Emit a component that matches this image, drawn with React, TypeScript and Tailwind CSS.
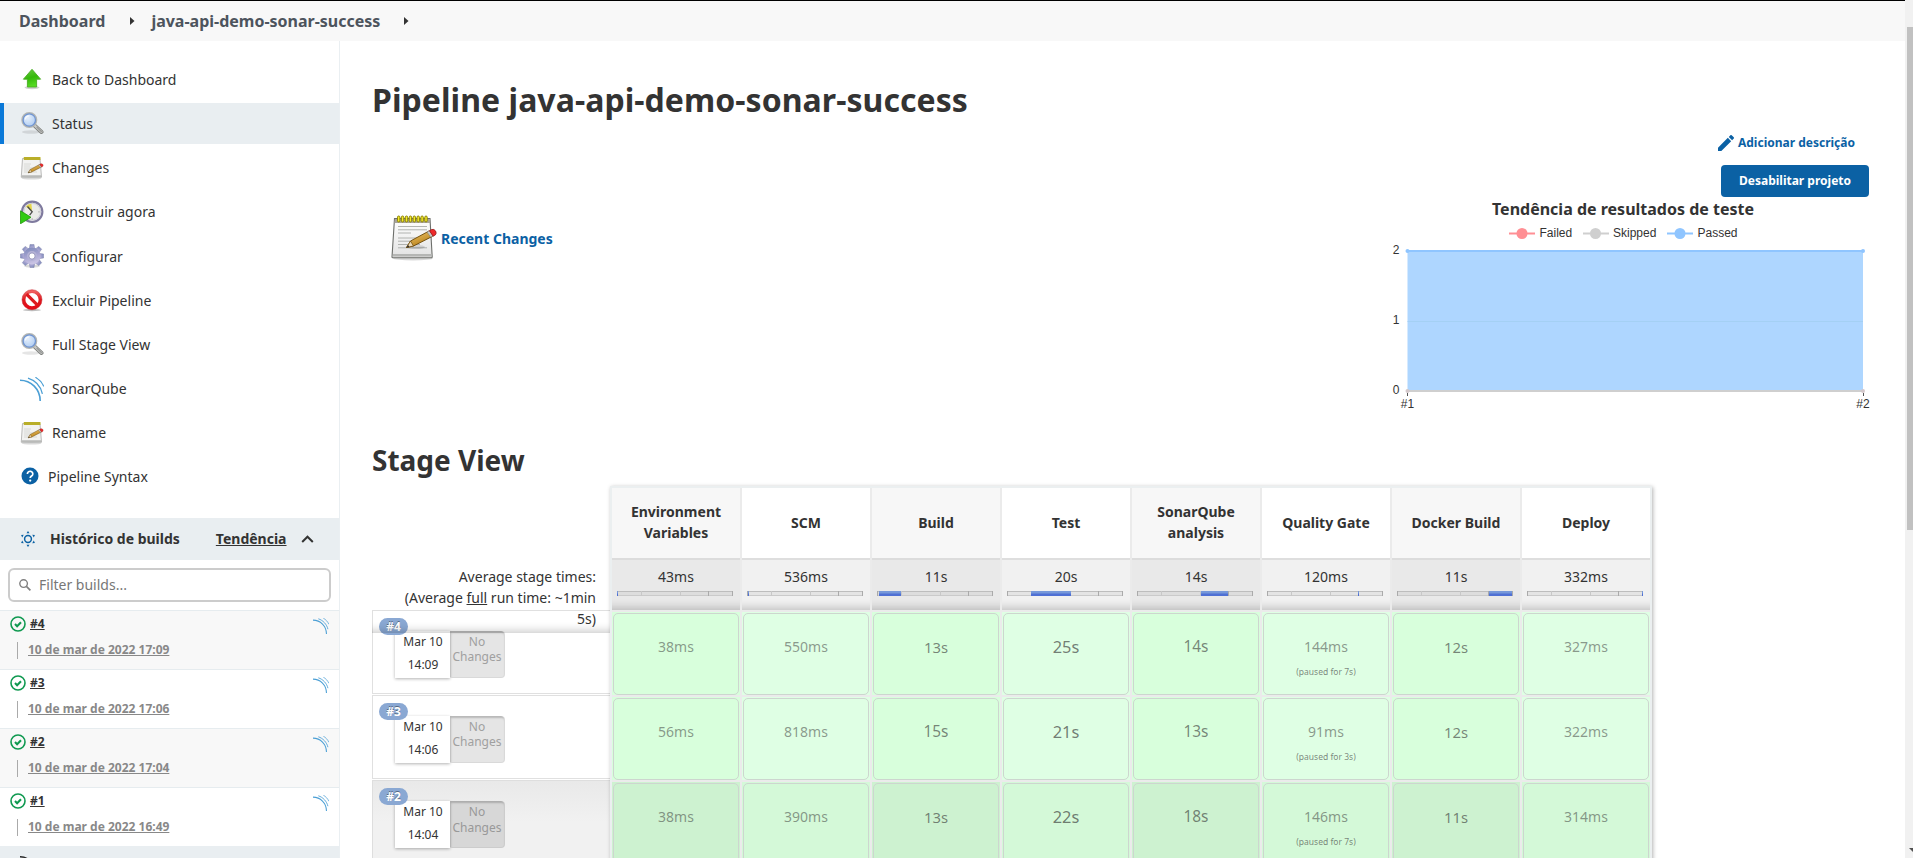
import React from "react";

const Magnifier = () => (
  <svg width="24" height="24" viewBox="0 0 24 24">
    <defs>
      <radialGradient id="lens" cx="0.4" cy="0.35" r="0.7">
        <stop offset="0" stopColor="#e6f0fc" />
        <stop offset="1" stopColor="#a9c8f0" />
      </radialGradient>
    </defs>
    <ellipse cx="11" cy="21" rx="9" ry="1.8" fill="#000" opacity="0.1" />
    <path d="M14.5 14.5l7 6.5" stroke="#7d7f7c" strokeWidth="4" strokeLinecap="round" />
    <path d="M15 14.8l6.5 6" stroke="#c9cac8" strokeWidth="2.4" strokeLinecap="round" />
    <path d="M17 16.2l4.4 4.2" stroke="#9a9b99" strokeWidth="1.4" strokeLinecap="round" />
    <circle cx="9.3" cy="9" r="7.1" fill="url(#lens)" stroke="#b4b6b3" strokeWidth="1.8" />
    <circle cx="9.3" cy="9" r="6.2" fill="none" stroke="#6f94d2" strokeWidth="1.3" />
    <path d="M5.4 8.5a4 4 0 014-3.6" stroke="#fff" strokeWidth="1.3" fill="none" opacity="0.8" />
  </svg>
);

const Pencil = () => (
  <g>
    <path d="M16.5 33.5l4-6.5L39 17l3.8 5.2L23.5 32z" fill="url(#pen)" stroke="#6a4606" strokeWidth="0.9" strokeLinejoin="round" />
    <path d="M16.5 33.5l4-6.5 3 5z" fill="#ecd9b4" stroke="#6a4606" strokeWidth="0.7" />
    <path d="M16.5 33.5l1.6-2.6 1.3 2z" fill="#2a2a2a" />
    <path d="M37 18l2.6-1.4 3.6 5.2-2.5 1.4z" fill="#c8cac7" stroke="#70726f" strokeWidth="0.5" />
    <path d="M39.4 16.7l2.2-1.2q2.6-.8 4 1.5t-.3 4l-2.2 1.2z" fill="#ee2a2a" stroke="#8e1010" strokeWidth="0.7" />
  </g>
);

const PadDefs = () => (
  <defs>
    <linearGradient id="paper" x1="0" y1="0" x2="0" y2="1">
      <stop offset="0" stopColor="#ffffff" />
      <stop offset="1" stopColor="#e2e2e2" />
    </linearGradient>
    <linearGradient id="pen" x1="0" y1="0" x2="0.6" y2="1">
      <stop offset="0" stopColor="#f4cf7a" />
      <stop offset="1" stopColor="#b47a0e" />
    </linearGradient>
  </defs>
);

const Notepad = () => (
  <svg width="48" height="48" viewBox="0 0 48 48">
    <PadDefs />
    <ellipse cx="23" cy="44.6" rx="20" ry="1.8" fill="#000" opacity="0.15" />
    <path d="M4.5 4.5h35.5l2.2 38.5q0 .8-.8.8H2.8q-.8 0-.8-.8z" fill="url(#paper)" stroke="#6d6f6b" strokeWidth="1.1" />
    <path d="M3 40h38.6v2.6H2.7z" fill="#b5b6b4" />
    <path d="M4.8 5h35l.3 4H4.5z" fill="#a9a49a" />
    <path d="M8 12.5h29M8 15.8h29M8 19h13M8 24h29M8 27.2h25M8 30.5h22M8 33.8h29" stroke="#a9aba8" strokeWidth="0.9" />
    <g fill="#f3ea27" stroke="#8e8408" strokeWidth="1">
      {[7.5, 11.4, 15.3, 19.2, 23.1, 27, 30.9, 34.8].map((x) => (
        <rect key={x} x={x} y="2" width="2.4" height="6" rx="1.2" />
      ))}
    </g>
    <ellipse cx="26" cy="33" rx="9" ry="2" fill="#000" opacity="0.12" />
    <Pencil />
  </svg>
);

const SmallNotepad = () => (
  <svg width="24" height="24" viewBox="0 0 48 48">
    <PadDefs />
    <ellipse cx="23" cy="44.6" rx="20" ry="2.4" fill="#000" opacity="0.15" />
    <path d="M5 5h35l3 37.5H2.5z" fill="#f2f2f1" stroke="#a9aaa8" strokeWidth="1.6" />
    <path d="M3.500 38.500h38.600l.4 4H3z" fill="#b9bab8" />
    <path d="M8 16h14M8 20h12M8 24h29M8 28h22M8 32h26" stroke="#d2d3d1" strokeWidth="1.6" />
    <path d="M7.500 2h33.500v6H7.500z" fill="#c3b92f" />
    <path d="M10 2v6M14 2v6M18 2v6M22 2v6M26 2v6M30 2v6M34 2v6M38 2v6" stroke="#a79c1f" strokeWidth="1.4" />
    <Pencil />
  </svg>
);

const UpArrow = () => (
  <svg width="24" height="24" viewBox="0 0 24 24">
    <defs>
      <linearGradient id="up" x1="0" y1="0" x2="0.3" y2="1">
        <stop offset="0" stopColor="#6ccc46" />
        <stop offset="0.55" stopColor="#35b80b" />
        <stop offset="1" stopColor="#55da22" />
      </linearGradient>
    </defs>
    <ellipse cx="12" cy="20.6" rx="7.5" ry="1.6" fill="#000" opacity="0.18" />
    <path d="M12 2.3L3.4 12.2h4v7.8h9.2v-7.8h4z" fill="url(#up)" stroke="#49ad24" strokeWidth="0.9" strokeLinejoin="round" />
  </svg>
);

const ClockPlay = () => (
  <svg width="24" height="24" viewBox="0 0 24 24">
    <circle cx="12.2" cy="11.8" r="10.2" fill="#ececee" stroke="#7f7a9e" strokeWidth="2.1" />
    <circle cx="12.2" cy="11.8" r="8.4" fill="#ebebe8" stroke="#c5c4d2" strokeWidth="0.8" />
    <path d="M12.2 11.8L5.8 6.6a8 8 0 015.6-2.8z" fill="#e6d64c" />
    <path d="M7.500 6.500l4.700 5.300-2.600 3.400" stroke="#4b4b4b" strokeWidth="1.300" fill="none" />
    <path d="M18.500 11.800h1M12.200 18.500v1" stroke="#999" strokeWidth="1.2" />
    <path d="M.5 10.800v13L11 17.300z" fill="#30cb12" stroke="#1f970a" strokeWidth="0.8" strokeLinejoin="round" />
  </svg>
);

const GearIcon = () => (
  <svg width="24" height="24" viewBox="0 0 24 24">
    <defs>
      <linearGradient id="gear" x1="0" y1="0" x2="0.3" y2="1">
        <stop offset="0" stopColor="#7987b8" />
        <stop offset="0.6" stopColor="#a9a6d2" />
        <stop offset="1" stopColor="#c9c3e4" />
      </linearGradient>
    </defs>
    <ellipse cx="12" cy="22" rx="8" ry="1.6" fill="#000" opacity="0.15" />
    <g fill="url(#gear)" stroke="#7f83ad" strokeWidth="0.5">
      {[0, 45, 90, 135, 180, 225, 270, 315].map((a) => (
        <path key={a} d="M9.2 6l.8-5.600h4l.8 5.600z" transform={`rotate(${a} 12 12)`} />
      ))}
    </g>
    <circle cx="12" cy="12" r="8.4" fill="url(#gear)" />
    <circle cx="12" cy="12" r="5" fill="#b4b2d6" />
    <circle cx="12" cy="12" r="3.1" fill="#fff" stroke="#8d8cb5" strokeWidth="0.8" />
  </svg>
);

const Forbidden = () => (
  <svg width="24" height="24" viewBox="0 0 24 24">
    <defs>
      <linearGradient id="ban" x1="0" y1="0" x2="0" y2="1">
        <stop offset="0" stopColor="#f06060" />
        <stop offset="0.5" stopColor="#dd1a1f" />
        <stop offset="1" stopColor="#e40a18" />
      </linearGradient>
    </defs>
    <ellipse cx="12" cy="22" rx="9" ry="1.2" fill="#000" opacity="0.25" />
    <circle cx="12" cy="11.7" r="8.3" fill="#fff" stroke="url(#ban)" strokeWidth="3.4" />
    <path d="M6.5 6.2l11 11" stroke="#dd1a1f" strokeWidth="3.2" />
    <circle cx="12" cy="11.7" r="10" fill="none" stroke="#c4232a" strokeWidth="0.5" />
  </svg>
);

const SonarWaves = ({ size }: { size: number }) => (
  <svg width={size} height={size} viewBox="0 0 24 24" fill="none" stroke="#4b9fd5">
    <path d="M0 3.2C11 3.2 20.2 12 20.2 24" strokeWidth="1.6" />
    <path d="M8 1.2C15 3.4 20.6 9.4 22.4 16.8" strokeWidth="1.3" />
    <path d="M15.4 .2C19 2.2 22 5.4 23.8 9.4" strokeWidth="1.1" />
  </svg>
);

const HelpIcon = () => (
  <svg width="18" height="18" viewBox="0 0 18 18">
    <circle cx="9" cy="9" r="8.5" fill="#0b61a4" />
    <path d="M6.4 7a2.7 2.6 0 115 1.2C10.600 9.200 9.200 9.400 9.200 11" stroke="#fff" strokeWidth="1.7" fill="none" />
    <circle cx="9.2" cy="13.6" r="1.15" fill="#fff" />
  </svg>
);

const SunIcon = () => (
  <svg width="16" height="16" viewBox="0 0 16 16">
    <circle cx="8" cy="8" r="3.4" fill="none" stroke="#0b61a4" strokeWidth="1.5" />
    {[0, 60, 120, 180, 240, 300].map((a) => (
      <path key={a} d="M6.500 2.200h3L8 0z" fill="#0b61a4" transform={`rotate(${a} 8 8)`} />
    ))}
  </svg>
);

const CheckCircle = () => (
  <svg width="16" height="16" viewBox="0 0 16 16" fill="none" stroke="#0f9950">
    <circle cx="8" cy="8" r="7" strokeWidth="1.6" />
    <path d="M5 8.1l2.100 2.100 3.900-3.900" strokeWidth="2.100" />
  </svg>
);

const menu: { label: string; icon: React.ReactNode; active?: boolean }[] = [
  { label: "Back to Dashboard", icon: <UpArrow /> },
  { label: "Status", icon: <Magnifier />, active: true },
  { label: "Changes", icon: <SmallNotepad /> },
  { label: "Construir agora", icon: <ClockPlay /> },
  { label: "Configurar", icon: <GearIcon /> },
  { label: "Excluir Pipeline", icon: <Forbidden /> },
  { label: "Full Stage View", icon: <Magnifier /> },
  { label: "SonarQube", icon: <SonarWaves size={24} /> },
  { label: "Rename", icon: <SmallNotepad /> },
];

const builds = [
  { id: "#4", date: "10 de mar de 2022 17:09" },
  { id: "#3", date: "10 de mar de 2022 17:06" },
  { id: "#2", date: "10 de mar de 2022 17:04" },
  { id: "#1", date: "10 de mar de 2022 16:49" },
];

const stages = [
  { name: "Environment Variables", avg: "43ms", from: 0, to: 1 },
  { name: "SCM", avg: "536ms", from: 1, to: 2 },
  { name: "Build", avg: "11s", from: 2, to: 24 },
  { name: "Test", avg: "20s", from: 24, to: 64 },
  { name: "SonarQube analysis", avg: "14s", from: 64, to: 91 },
  { name: "Quality Gate", avg: "120ms", from: 91, to: 92 },
  { name: "Docker Build", avg: "11s", from: 92, to: 115 },
  { name: "Deploy", avg: "332ms", from: 115, to: 116 },
];

const S = "text-[14px] text-[#333]/50";
const M = "text-[14.8px] text-[#333]/60";
const L = "text-[15.4px] text-[#333]/60";
const XL = "text-[16.4px] text-[#333]/65";

type Run = { id: string; time: string; cells: [string, string, string?][] };
const runs: Run[] = [
  {
    id: "#4",
    time: "14:09",
    cells: [["38ms", S], ["550ms", S], ["13s", M], ["25s", XL], ["14s", L], ["144ms", S, "(paused for 7s)"], ["12s", M], ["327ms", S]],
  },
  {
    id: "#3",
    time: "14:06",
    cells: [["56ms", S], ["818ms", S], ["15s", L], ["21s", XL], ["13s", L], ["91ms", S, "(paused for 3s)"], ["12s", M], ["322ms", S]],
  },
  {
    id: "#2",
    time: "14:04",
    cells: [["38ms", S], ["390ms", S], ["13s", M], ["22s", XL], ["18s", L], ["146ms", S, "(paused for 7s)"], ["11s", M], ["314ms", S]],
  },
];

function Header() {
  return (
    <header className="flex h-[41px] items-center border-t border-black bg-[#f8f8f8] pl-[19px] text-[16px] font-bold text-[#4d545d]">
      <span>Dashboard</span>
      <svg className="ml-[25px]" width="5" height="8" viewBox="0 0 5 8"><path d="M0 0l4.500 4L0 8z" fill="#333" /></svg>
      <span className="ml-4">java-api-demo-sonar-success</span>
      <svg className="ml-6" width="5" height="8" viewBox="0 0 5 8"><path d="M0 0l4.500 4L0 8z" fill="#333" /></svg>
    </header>
  );
}

function Sidebar() {
  return (
    <aside className="flex w-[340px] shrink-0 flex-col border-r border-[#eaeff2]">
      <nav className="mt-[17.700px] flex h-[439.300px] shrink-0 flex-col gap-[3px] text-[14px]">
        {menu.map((m) => (
          <div
            key={m.label}
            className={
              m.active
                ? "flex h-[41.200px] items-center gap-2 border-l-4 border-[#0b79d8] bg-[#e9eef1] pl-4"
                : "flex h-[41.200px] items-center gap-2 pl-5"
            }
          >
            {m.icon}
            <span>{m.label}</span>
          </div>
        ))}
        <div className="flex h-[40px] items-center gap-[9px] pl-[21px]">
          <HelpIcon />
          <span>Pipeline Syntax</span>
        </div>
      </nav>
      <div className="mt-[20px] flex h-[42px] shrink-0 items-center bg-[#e9eef1] pl-5 text-[14px] font-bold">
        <SunIcon />
        <span className="ml-[14px]">Histórico de builds</span>
        <span className="ml-[36px] underline">Tendência</span>
        <svg className="ml-[14px]" width="13" height="8" viewBox="0 0 13 8"><path d="M1.200 7l5.300-5.300L11.800 7" fill="none" stroke="#333" strokeWidth="2" /></svg>
      </div>
      <div className="mx-2 my-2 flex h-[34px] shrink-0 items-center rounded-md border-2 border-[#ccc] pl-[9px] text-[14px] text-[#777]">
        <svg width="12" height="12" viewBox="0 0 12 12" fill="none" stroke="#808080" strokeWidth="1.400"><circle cx="4.600" cy="4.600" r="3.800" /><path d="M7.400 7.400l4 4" strokeWidth="1.700" /></svg>
        <span className="ml-[8px]">Filter builds...</span>
      </div>
      {builds.map((b, i) => (
        <div
          key={b.id}
          className={
            i % 2 === 0
              ? "flex h-[59px] shrink-0 justify-between border-t border-[#e6ecef] bg-[#f8f8f8] pr-[10px] pl-[10px] text-[12px] font-bold"
              : "flex h-[59px] shrink-0 justify-between border-t border-[#e6ecef] bg-white pr-[10px] pl-[10px] text-[12px] font-bold"
          }
        >
          <div className="flex flex-col">
            <div className="mt-[5px] flex h-4 items-center gap-1">
              <CheckCircle />
              <span className="underline">{b.id}</span>
            </div>
            <div className="mt-[10px] ml-[7px] flex h-[17px] items-center border-l border-[#aaa] pl-[10px] text-[#888]">
              <span className="underline">{b.date}</span>
            </div>
          </div>
          <div className="mt-[7px]"><SonarWaves size={16} /></div>
        </div>
      ))}
      <div className="flex h-3 shrink-0 items-end bg-[#e9eef1] pl-5">
        <svg width="8" height="2" viewBox="0 0 8 2"><path d="M0 0l4 .4L7.500 2H5L0 1.600z" fill="#222" /></svg>
      </div>
    </aside>
  );
}

function TrendChart() {
  return (
    <svg className="block overflow-visible" width="484" height="220" viewBox="1385 197 484 220" fontFamily="Liberation Sans, Arial, sans-serif" fontSize="12" fontWeight="400" fill="#333">
      <text x="1623" y="214.500" textAnchor="middle" fontFamily="Noto Sans, sans-serif" fontSize="16" fontWeight="700">Tendência de resultados de teste</text>
      <g strokeWidth="2">
        <path d="M1509 233.500h26" stroke="#ff8f94" /><circle cx="1522" cy="233.500" r="5.500" fill="#ff8f94" />
        <path d="M1583 233.500h26" stroke="#cfcfcf" /><circle cx="1595.500" cy="233.500" r="5.500" fill="#cfcfcf" />
        <path d="M1667 233.500h26" stroke="#8fc5ff" /><circle cx="1680" cy="233.500" r="5.500" fill="#8fc5ff" />
      </g>
      <text x="1539.500" y="237">Failed</text>
      <text x="1613" y="237">Skipped</text>
      <text x="1697.500" y="237">Passed</text>
      <rect x="1407.500" y="251" width="455.500" height="140" fill="#aed6ff" />
      <path d="M1407.500 321.500h455.500" stroke="#a4d0f4" />
      <path d="M1407.500 251h455.500" stroke="#8fc5ff" strokeWidth="2" />
      <path d="M1407.500 391h455.500" stroke="#cfcfcf" strokeWidth="2" />
      <circle cx="1407.500" cy="251" r="2" fill="#8fc5ff" />
      <circle cx="1863" cy="251" r="2" fill="#8fc5ff" />
      <circle cx="1407.500" cy="391" r="2" fill="#d4c8cb" />
      <circle cx="1863" cy="391" r="2" fill="#d4c8cb" />
      <path d="M1407.500 393v3M1863.500 393v3" stroke="#555" />
      <g textAnchor="end">
        <text x="1399.500" y="254">2</text>
        <text x="1399.500" y="324">1</text>
        <text x="1399.500" y="394">0</text>
      </g>
      <g textAnchor="middle">
        <text x="1407.500" y="408">#1</text>
        <text x="1863" y="408">#2</text>
      </g>
    </svg>
  );
}

function ProgressBar({ from, to }: { from: number; to: number }) {
  return (
    <svg width="116" height="6" viewBox="0 0 116 6" className="ml-[5px] overflow-visible">
      <rect x="0" y="0" width="116" height="5" fill="#000" fillOpacity="0.05" />
      <path d="M0 .5h116" stroke="#bdbdbd" />
      <path d="M0 4.500h116" stroke="#cacaca" />
      <path d="M.5 0v5M115.500 0v5M91.500 0v5" stroke="#aaa" />
      <path d="M24.500 0v5M63.500 0v5" stroke="#c8c8c8" />
      <rect x={from} y="0" width={to - from} height="3" fill="#7698da" />
      <rect x={from} y="2.500" width={to - from} height="2.500" fill="#4f70d4" />
    </svg>
  );
}

function RunLabel({ run, dark }: { run: Run; dark: boolean }) {
  return (
    <div
      className={
        dark
          ? "mb-[1px] h-[84px] border border-r-0 border-[#dedede] bg-linear-to-b from-[#e9e9e9] to-[#f1f1f1] to-50% pl-[22px]"
          : "mb-[1px] h-[84px] border border-r-0 border-[#e0e0e0] bg-white pl-[22px]"
      }
    >
      <div className="relative mt-[20px] flex h-[47px] text-[12px] leading-[14px]">
        <div className="flex w-[55px] flex-col items-center bg-white pt-[4px] pl-[1px] shadow-[0_1px_3px_rgba(0,0,0,0.3)]">
          <span>Mar 10</span>
          <span className="mt-[9px]">{run.time}</span>
        </div>
        <div
          className={
            dark
              ? "w-[55px] rounded-r border-r border-b border-black/5 bg-[#d7d7d7] pt-[3px] text-center leading-[15.500px] text-[#999] shadow-[inset_1px_2px_2px_rgba(0,0,0,0.200)]"
              : "w-[55px] rounded-r border-r border-b border-black/5 bg-[#e5e5e5] pt-[3px] text-center leading-[15px] text-[#a0a0a0] shadow-[inset_1px_2px_2px_rgba(0,0,0,0.200)]"
          }
        >
          No Changes
        </div>
        <span className="absolute -top-[13px] -left-[16px] flex h-[17px] w-[29px] items-center justify-center rounded-full bg-[#8aa8d3] font-bold text-white [text-shadow:0_-1px_0_rgba(0,0,0,0.400)]">
          {run.id}
        </span>
      </div>
    </div>
  );
}

function StageTable() {
  return (
    <div className="mt-2 flex text-[14px]">
      <div className="w-[238px] shrink-0">
        <div className="h-[74px]" />
        <div className="relative z-10 mb-[-23px] h-[73px] pt-[6px] pr-[14px] text-right leading-[21px] shadow-[inset_0_-12px_10px_-10px_rgba(0,0,0,0.220)]">
          Average stage times:
          <br />
          (Average <span className="underline">full</span> run time: ~1min
          <br />
          5s)
        </div>
        {runs.map((r, i) => (
          <RunLabel key={r.id} run={r} dark={i === 2} />
        ))}
      </div>
      <div className="flex gap-[2px] border-x-2 border-t-2 border-[#ebeff0] bg-[#ebebeb] shadow-[1px_1px_4px_rgba(0,0,0,0.300)]">
        {stages.map((s, i) => (
          <div key={s.name} className="w-[128px]">
            <div className={i % 2 === 0 ? "flex h-[70px] items-center justify-center bg-[#f7f7f7] px-3 pb-[2px] text-center leading-[21px] font-bold" : "flex h-[70px] items-center justify-center bg-white px-3 pb-[2px] text-center leading-[21px] font-bold"}>
              {s.name}
            </div>
            <div className={i % 2 === 0 ? "h-[52px] border-t-2 border-[#dcdcdc] bg-[#e9e9e9] shadow-[inset_0_-12px_10px_-10px_rgba(0,0,0,0.220)]" : "h-[52px] border-t-2 border-[#dedede] bg-[#f1f1f1] shadow-[inset_0_-12px_10px_-10px_rgba(0,0,0,0.220)]"}>
              <div className="h-[31px] pt-[6px] text-center leading-[21px]">{s.avg}</div>
              <ProgressBar from={s.from} to={s.to} />
            </div>
            {runs.map((r, ri) => {
              const [value, tone, note] = r.cells[i];
              const bg =
                ri === 2
                  ? i % 2 === 0 ? "bg-[#cdf2d0]" : "bg-[#d4f9d8]"
                  : i % 2 === 0 ? "bg-[#d8ffdc]" : "bg-[#dfffe4]";
              return (
                <div key={r.id} className="h-[85px] pt-[2px]">
                  <div className={`h-[83px] p-[1px] ${bg}`}>
                    <div className="flex h-[82px] flex-col items-center rounded-[5px] border border-[#cdd6cf] pt-[22px]">
                      <span className={`leading-[22px] ${tone}`}>{value}</span>
                      {note && <span className="mt-[8px] text-[8.500px] leading-[12px] text-[#444]/65">{note}</span>}
                    </div>
                  </div>
                </div>
              );
            })}
          </div>
        ))}
      </div>
    </div>
  );
}

export default function App() {
  return (
    <div className="flex h-[858px] w-[1913px] overflow-hidden bg-white font-['Noto_Sans',sans-serif] text-[#333]">
      <div className="flex w-[1905px] shrink-0 flex-col">
        <Header />
        <div className="flex h-[817px]">
          <Sidebar />
          <main className="flex h-[817px] flex-1 flex-col items-start overflow-hidden pt-[39px] pr-9 pl-8">
            <h1 className="text-[32px] leading-[40px] font-bold tracking-[0.050px]">Pipeline java-api-demo-sonar-success</h1>
            <div className="flex w-full justify-between">
              <div className="mt-[94px] ml-[18px] flex h-12 items-center gap-[3px] text-[14px] font-bold text-[#0b61a4]">
                <Notepad />
                <span>Recent Changes</span>
              </div>
              <div className="flex flex-col items-end text-[12px] font-bold">
                <div className="mt-[13px] mr-[14px] flex h-5 items-center gap-1 text-[#0b61a4]">
                  <svg width="16" height="16" viewBox="3 3 18 18" fill="#0b61a4"><path d="M3 17.250V21h3.750L17.810 9.940l-3.750-3.750L3 17.250zM20.710 7.040a1 1 0 000-1.410l-2.340-2.340a1 1 0 00-1.410 0l-1.830 1.830 3.750 3.750 1.830-1.830z" /></svg>
                  <span>Adicionar descrição</span>
                </div>
                <div className="mt-3 flex h-8 w-[148px] items-center justify-center rounded bg-[#0b61a4] text-white">Desabilitar projeto</div>
                <TrendChart />
              </div>
            </div>
            <h2 className="mt-[25px] text-[28px] leading-[36px] font-bold">Stage View</h2>
            <StageTable />
          </main>
        </div>
      </div>
      <div className="flex h-full w-2 shrink-0 flex-col items-end bg-[#f1f1f1]">
        <div className="mt-[27px] h-[503px] w-[6px] bg-[#c1c1c1]" />
        <svg className="mt-auto mb-[6px]" width="4" height="4" viewBox="0 0 4 4"><path d="M0 0h4v4z" fill="#505050" /></svg>
      </div>
    </div>
  );
}
